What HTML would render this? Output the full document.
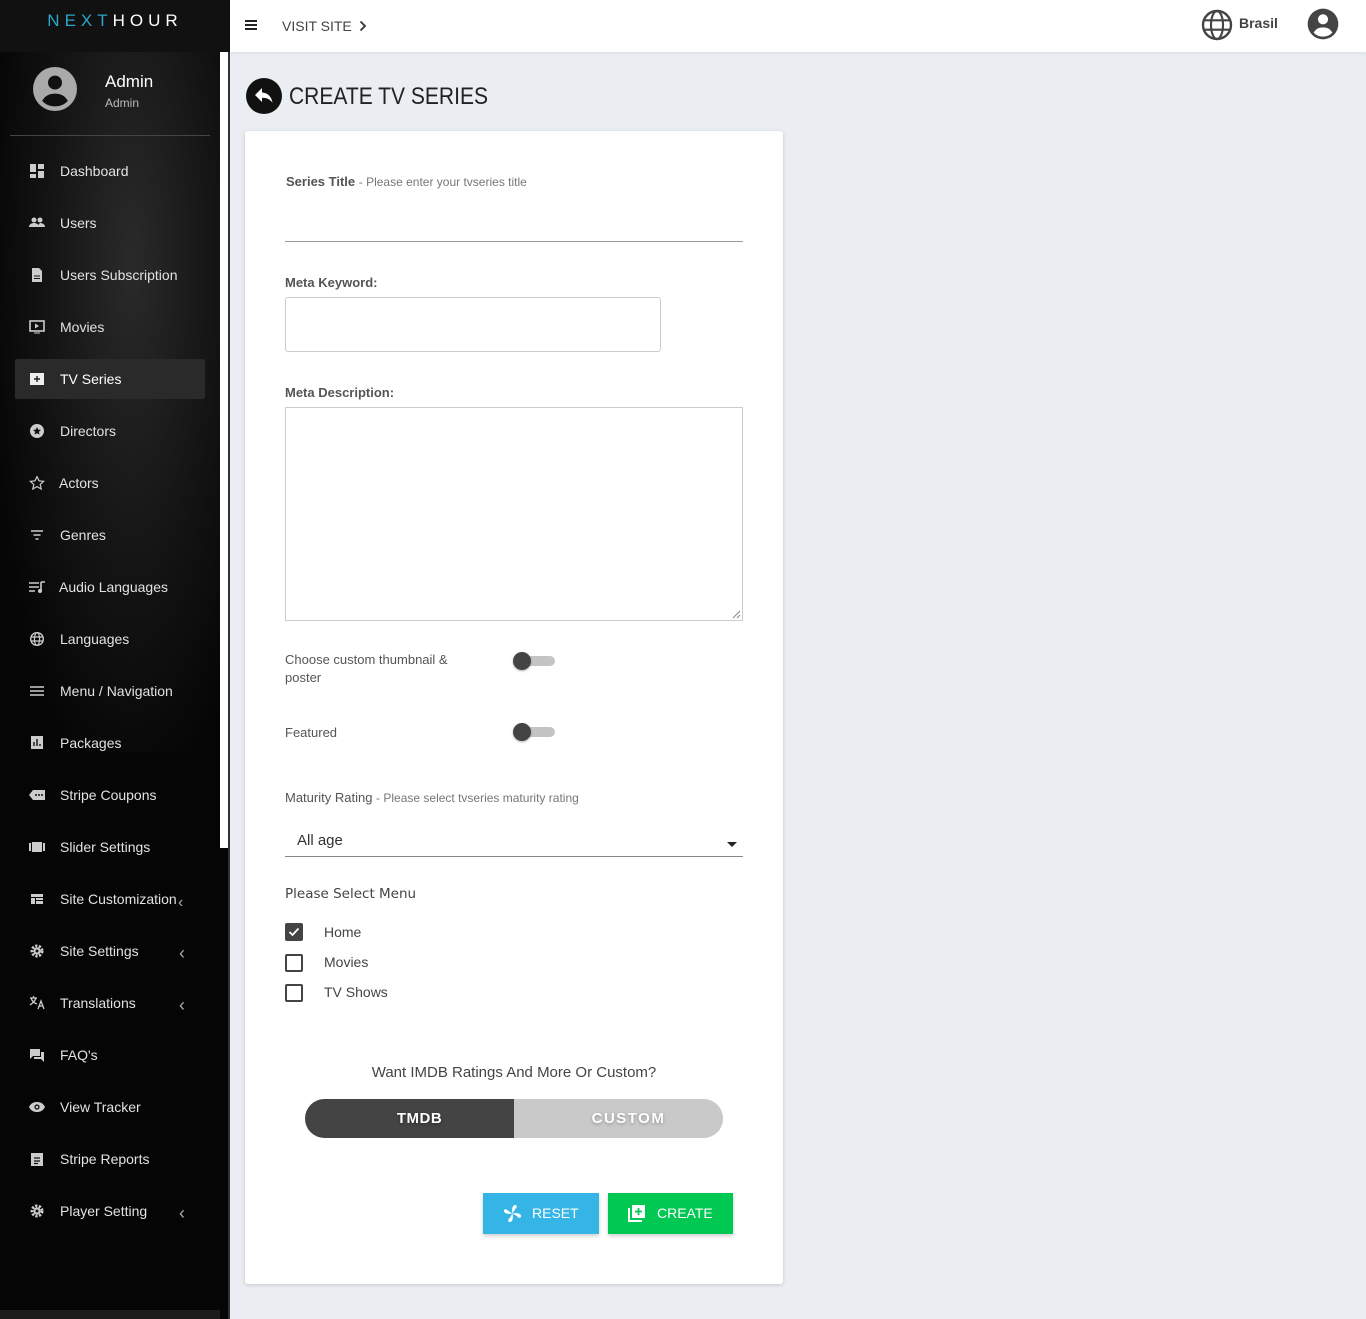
<!DOCTYPE html>
<html><head><meta charset="utf-8">
<style>
*{box-sizing:border-box;margin:0;padding:0}
body{width:1366px;height:1319px;overflow:hidden;background:#eaedf2;font-family:"Liberation Sans",sans-serif;position:relative}
#side{position:absolute;left:0;top:0;width:230px;height:1319px;background:#050505;}
#side .bg{position:absolute;left:0;top:52px;width:220px;height:700px;background:radial-gradient(ellipse at 60% 30%,#2a2a2a 0%,#141414 45%,#050505 80%)}
#logo{position:absolute;left:0;top:0;width:230px;height:52px;background:#111;text-align:center;line-height:42px;font-size:17px;letter-spacing:5px}
#logo .a{color:#2aa6c8}#logo .b{color:#fff}
.strip{position:absolute;left:220px;top:52px;width:8px;height:796px;background:#fff}
.strip2{position:absolute;left:228px;top:52px;width:2px;height:1267px;background:#2b3338}
.user{position:absolute;left:33px;top:67px}
.uname{position:absolute;left:105px;top:72px;color:#fff;font-size:17px}
.urole{position:absolute;left:105px;top:96px;color:#bbb;font-size:12px}
.hr{position:absolute;left:10px;top:135px;width:200px;height:1px;background:#444}
.item{position:absolute;left:0;width:220px;height:40px;color:#e2e2e2;font-size:14px;line-height:40px}
.item .ic{position:absolute;left:29px;top:13px;width:16px;height:14px}
.item span.t{position:absolute;left:60px}
.item .ch{position:absolute;left:179px;top:2px;color:#aaa;font-size:18px}
.active{background:#2a2a2a;left:15px;width:190px;border-radius:2px}
.active .ic{left:14px}.active span.t{left:45px}
#top{position:absolute;left:230px;top:0;width:1136px;height:52px;background:#fff;box-shadow:0 1px 3px rgba(0,0,0,.08)}
#card{position:absolute;left:245px;top:131px;width:538px;height:1153px;background:#fff;border-radius:3px;box-shadow:0 1px 4px rgba(0,0,0,.15)}
.lbl{position:absolute;color:#555;font-size:13px}
.lbl small{color:#777;font-size:12px}
.tog{position:absolute;width:40px;height:10px;background:#c4c4c4;border-radius:5px}
.tog:before{content:"";position:absolute;left:-2px;top:-4px;width:18px;height:18px;border-radius:50%;background:#444;box-shadow:0 1px 2px rgba(0,0,0,.3)}
.cb{position:absolute;left:285px;width:18px;height:18px;border:2px solid #444;border-radius:2px}
.cbl{position:absolute;left:324px;font-size:14px;color:#444}
</style></head><body>
<div id="side">
<div class="bg"></div>
<div id="logo"><span class="a">NEXT</span><span class="b">HOUR</span></div>
<div class="strip"></div><div class="strip2"></div>
<svg class="user" width="44" height="44" viewBox="0 0 24 24"><circle cx="12" cy="12" r="12" fill="#aaa"/><circle cx="12" cy="8.5" r="3.8" fill="#111"/><path d="M5 18.5c1.5-3 4.2-4 7-4s5.5 1 7 4c-1.8 2-4.2 3-7 3s-5.2-1-7-3z" fill="#111"/></svg>
<div class="uname">Admin</div><div class="urole">Admin</div>
<div class="hr"></div>
<div class="item" style="top:151px"><svg class="ic" viewBox="0 0 16 14"><path d="M1 0h6v8H1zM9 0h6v5H9zM9 7h6v7H9zM1 10h6v4H1z" fill="#ccc"/></svg><span class="t">Dashboard</span></div>
<div class="item" style="top:203px"><svg class="ic" viewBox="0 0 16 14"><circle cx="5" cy="4" r="2.5" fill="#ccc"/><circle cx="11" cy="4" r="2.5" fill="#ccc"/><path d="M0 11c0-3 3-4 5-4s5 1 5 4zM9 11c0-2 1-3 2-4 2 0 5 1 5 4z" fill="#ccc"/></svg><span class="t">Users</span></div>
<div class="item" style="top:255px"><svg class="ic" viewBox="0 0 16 14"><path d="M3 0h7l3 3v11H3z" fill="#ccc"/><path d="M5 8h6M5 10.5h6" stroke="#111" stroke-width="1"/></svg><span class="t">Users Subscription</span></div>
<div class="item" style="top:307px"><svg class="ic" viewBox="0 0 16 14"><rect x="1" y="1" width="14" height="10" fill="none" stroke="#ccc" stroke-width="1.6"/><path d="M6 3.5v5l4-2.5z" fill="#ccc"/><path d="M5 13h6" stroke="#ccc"/></svg><span class="t">Movies</span></div>
<div class="item active" style="top:359px"><svg class="ic" viewBox="0 0 16 14"><rect x="1" y="1" width="14" height="12" fill="#eee"/><path d="M5 7h6M8 4v6" stroke="#222" stroke-width="1.4"/></svg><span class="t" style="color:#fff">TV Series</span></div>
<div class="item" style="top:411px"><svg class="ic" viewBox="0 0 16 14"><circle cx="8" cy="7" r="7" fill="#ccc"/><path d="M8 3l1.2 2.6 2.8.3-2.1 1.9.6 2.8L8 9.2l-2.5 1.4.6-2.8L4 5.9l2.8-.3z" fill="#111"/></svg><span class="t">Directors</span></div>
<div class="item" style="top:463px"><svg class="ic" viewBox="0 0 16 14"><path d="M8 0.5l2 4.3 4.6.5-3.4 3.1 1 4.6L8 10.6l-4.2 2.4 1-4.6L1.4 5.3 6 4.8z" fill="none" stroke="#ccc" stroke-width="1.2"/></svg><span class="t" style="left:59px">Actors</span></div>
<div class="item" style="top:515px"><svg class="ic" viewBox="0 0 16 14"><path d="M2 3h12M4.5 7h7M6.5 11h3" stroke="#ccc" stroke-width="1.6"/></svg><span class="t">Genres</span></div>
<div class="item" style="top:567px"><svg class="ic" viewBox="0 0 16 14"><path d="M0 3h10M0 7h10M0 11h6M12 2v9M12 2h4" stroke="#ccc" stroke-width="1.6"/><circle cx="11" cy="11" r="2" fill="#ccc"/></svg><span class="t" style="left:59px">Audio Languages</span></div>
<div class="item" style="top:619px"><svg class="ic" viewBox="0 0 16 14"><circle cx="8" cy="7" r="6.3" fill="none" stroke="#ccc" stroke-width="1.4"/><ellipse cx="8" cy="7" rx="2.6" ry="6.3" fill="none" stroke="#ccc" stroke-width="1.2"/><path d="M2 5h12M2 9h12" stroke="#ccc" stroke-width="1.2"/></svg><span class="t">Languages</span></div>
<div class="item" style="top:671px"><svg class="ic" viewBox="0 0 16 14"><path d="M1 3h14M1 7h14M1 11h14" stroke="#ccc" stroke-width="1.6"/></svg><span class="t">Menu / Navigation</span></div>
<div class="item" style="top:723px"><svg class="ic" viewBox="0 0 16 14"><rect x="2" y="0" width="12" height="13" fill="#ccc"/><path d="M5 10V6M8 10V3M11 10V8" stroke="#111" stroke-width="1.4"/></svg><span class="t">Packages</span></div>
<div class="item" style="top:775px"><svg class="ic" viewBox="0 0 16 14"><path d="M4 2h12v10H4L0 7z" fill="#ccc"/><circle cx="7" cy="7" r="1" fill="#111"/><circle cx="10" cy="7" r="1" fill="#111"/><circle cx="13" cy="7" r="1" fill="#111"/></svg><span class="t">Stripe Coupons</span></div>
<div class="item" style="top:827px"><svg class="ic" viewBox="0 0 16 14"><path d="M0 3h2v8H0zM3 2h10v10H3zM14 3h2v8h-2z" fill="#ccc"/></svg><span class="t">Slider Settings</span></div>
<div class="item" style="top:879px"><svg class="ic" viewBox="0 0 16 14"><path d="M2 2h12v3H2zM2 6h4v6H2zM7 6h7v2H7zM7 9h7v3H7z" fill="#ccc"/></svg><span class="t">Site Customization</span><span class="ch" style="left:178px;top:4px;font-size:16px">‹</span></div>
<div class="item" style="top:931px"><svg class="ic" viewBox="0 0 16 14"><circle cx="8" cy="7" r="5" fill="none" stroke="#ccc" stroke-width="3" stroke-dasharray="2.2 1.4"/><circle cx="8" cy="7" r="3.5" fill="#ccc"/><circle cx="8" cy="7" r="1.5" fill="#111"/></svg><span class="t">Site Settings</span><span class="ch">‹</span></div>
<div class="item" style="top:983px"><svg class="ic" viewBox="0 0 16 14"><path d="M1 2h7M4.5 0v2M2 2c1 3 3 5 6 6M7 2c-1 3-3 5-6 7M9 13l3-8 3 8M10 10h4" stroke="#ccc" stroke-width="1.3" fill="none"/></svg><span class="t">Translations</span><span class="ch">‹</span></div>
<div class="item" style="top:1035px"><svg class="ic" viewBox="0 0 16 14"><path d="M1 1h10v7H4l-3 3z" fill="#ccc"/><path d="M12 4h3v10l-3-3H5V9h7z" fill="#ccc"/></svg><span class="t">FAQ's</span></div>
<div class="item" style="top:1087px"><svg class="ic" viewBox="0 0 16 14"><path d="M0 7c2-4 5-5 8-5s6 1 8 5c-2 4-5 5-8 5s-6-1-8-5z" fill="#ccc"/><circle cx="8" cy="7" r="2.6" fill="#111"/><circle cx="8" cy="7" r="1.3" fill="#ccc"/></svg><span class="t">View Tracker</span></div>
<div class="item" style="top:1139px"><svg class="ic" viewBox="0 0 16 14"><rect x="2" y="1" width="12" height="13" fill="#ccc"/><path d="M5 6h6M5 9h6M5 11.5h4" stroke="#111" stroke-width="1.2"/></svg><span class="t">Stripe Reports</span></div>
<div class="item" style="top:1191px"><svg class="ic" viewBox="0 0 16 14"><circle cx="8" cy="7" r="5" fill="none" stroke="#ccc" stroke-width="3" stroke-dasharray="2.2 1.4"/><circle cx="8" cy="7" r="3.5" fill="#ccc"/><circle cx="8" cy="7" r="1.5" fill="#111"/></svg><span class="t">Player Setting</span><span class="ch">‹</span></div>
<div style="position:absolute;left:0;top:1310px;width:220px;height:9px;background:#1c1c1c"></div>
</div>

<div id="top">
<svg style="position:absolute;left:15px;top:20px" width="12" height="10" viewBox="0 0 12 10"><path d="M0 1h12M0 5h12M0 9h12" stroke="#222" stroke-width="2"/></svg>
<div style="position:absolute;left:52px;top:18px;font-size:14px;color:#444">VISIT SITE</div>
<svg style="position:absolute;left:129px;top:20px" width="8" height="12" viewBox="0 0 8 12"><path d="M1.5 1.5l4.5 4.5-4.5 4.5" stroke="#333" stroke-width="1.8" fill="none"/></svg>
<svg style="position:absolute;left:971px;top:9px" width="32" height="32" viewBox="0 0 24 24"><circle cx="12" cy="12" r="10.5" fill="none" stroke="#444" stroke-width="1.8"/><ellipse cx="12" cy="12" rx="4.5" ry="10.5" fill="none" stroke="#444" stroke-width="1.6"/><path d="M1.5 8.5h21M1.5 15.5h21" stroke="#444" stroke-width="1.6"/></svg>
<div style="position:absolute;left:1009px;top:15px;font-size:14px;font-weight:bold;color:#444">Brasil</div>
<svg style="position:absolute;left:1077px;top:8px" width="32" height="32" viewBox="0 0 24 24"><circle cx="12" cy="12" r="11.5" fill="#444"/><circle cx="12" cy="8.5" r="3.8" fill="#fff"/><path d="M5 18.5c1.5-3 4.2-4 7-4s5.5 1 7 4c-1.8 2-4.2 3-7 3s-5.2-1-7-3z" fill="#fff"/></svg>
</div>

<svg style="position:absolute;left:245px;top:77px" width="38" height="38" viewBox="0 0 38 38"><circle cx="19" cy="19" r="18" fill="#111"/><path d="M17 11l-7 7 7 7v-4.3c5 0 8 1.5 10.5 5-1-5.5-4-9.5-10.5-10.3z" fill="#fff"/></svg>
<div style="position:absolute;left:289px;top:83px;font-size:24px;color:#222;transform:scaleX(.876);transform-origin:0 0;white-space:nowrap">CREATE TV SERIES</div>

<div id="card"></div>
<div class="lbl" style="left:286px;top:174px;font-weight:bold;font-size:13px;color:#555">Series Title <small style="font-weight:normal">- Please enter your tvseries title</small></div>
<div style="position:absolute;left:285px;top:241px;width:458px;height:1px;background:#999"></div>
<div class="lbl" style="left:285px;top:275px;font-weight:bold">Meta Keyword:</div>
<div style="position:absolute;left:285px;top:297px;width:376px;height:55px;border:1px solid #ccc;border-radius:3px"></div>
<div class="lbl" style="left:285px;top:385px;font-weight:bold">Meta Description:</div>
<div style="position:absolute;left:285px;top:407px;width:458px;height:214px;border:1px solid #ccc"></div>
<svg style="position:absolute;left:732px;top:610px" width="9" height="9" viewBox="0 0 9 9"><path d="M8 1L1 8M8 5L5 8" stroke="#888"/></svg>
<div class="lbl" style="left:285px;top:651px;line-height:18px">Choose custom thumbnail &amp;<br>poster</div>
<div class="tog" style="left:515px;top:656px"></div>
<div class="lbl" style="left:285px;top:725px">Featured</div>
<div class="tog" style="left:515px;top:727px"></div>
<div class="lbl" style="left:285px;top:790px">Maturity Rating <small>- Please select tvseries maturity rating</small></div>
<div style="position:absolute;left:297px;top:832px;font-size:15px;color:#333">All age</div>
<svg style="position:absolute;left:727px;top:842px" width="10" height="6"><path d="M0 0h10L5 5z" fill="#222"/></svg>
<div style="position:absolute;left:285px;top:856px;width:458px;height:1px;background:#888"></div>
<div style="position:absolute;left:285px;top:886px;color:#444;font-family:'DejaVu Sans',sans-serif;font-size:13.5px">Please Select Menu</div>
<div class="cb" style="top:923px;background:#444"><svg width="14" height="14" viewBox="0 0 14 14"><path d="M2.5 7l3 3 6-6.5" stroke="#fff" stroke-width="1.8" fill="none"/></svg></div>
<div class="cbl" style="top:924px">Home</div>
<div class="cb" style="top:954px"></div><div class="cbl" style="top:954px">Movies</div>
<div class="cb" style="top:984px"></div><div class="cbl" style="top:984px">TV Shows</div>
<div style="position:absolute;left:245px;width:538px;top:1064px;text-align:center;font-size:15px;color:#444">Want IMDB Ratings And More Or Custom?</div>
<div style="position:absolute;left:305px;top:1099px;width:418px;height:39px;border-radius:20px;overflow:hidden;background:#c9c9c9">
<div style="position:absolute;left:0;top:0;width:229px;height:39px;background:#444;"></div>
<div style="position:absolute;left:0;top:0;width:229px;height:39px;color:#fff;text-align:center;line-height:39px;font-weight:bold;font-size:15px;letter-spacing:.5px;text-shadow:0 1px 3px rgba(0,0,0,.4)">TMDB</div>
<div style="position:absolute;left:209px;top:0;width:229px;height:39px;background:#c9c9c9;color:#fff;text-align:center;line-height:39px;font-weight:bold;font-size:15px;letter-spacing:1.5px;text-shadow:0 1px 3px rgba(0,0,0,.3)">CUSTOM</div></div>
<div style="position:absolute;left:483px;top:1193px;width:116px;height:41px;background:#35b5e5;box-shadow:0 2px 4px rgba(0,0,0,.2);color:#fff;font-size:14px;line-height:41px">
<svg style="position:absolute;left:20px;top:11px" width="19" height="19" viewBox="0 0 20 20"><path d="M10 10C9 5 10 1 13 1c2 0 2 3 0 4zM10 10c5-1 9 0 9 3 0 2-3 2-4 0zM10 10c1 5 0 9-3 9-2 0-2-3 0-4zM10 10C5 11 1 10 1 7c0-2 3-2 4 0z" fill="#fff"/></svg><span style="position:absolute;left:49px">RESET</span></div>
<div style="position:absolute;left:608px;top:1193px;width:125px;height:41px;background:#00c853;box-shadow:0 2px 4px rgba(0,0,0,.2);color:#fff;font-size:14px;line-height:41px">
<svg style="position:absolute;left:20px;top:11px" width="18" height="18" viewBox="0 0 18 18"><path d="M1 4v13h13" stroke="#fff" stroke-width="2" fill="none"/><rect x="4" y="1" width="13" height="13" fill="#fff"/><path d="M10.5 4v7M7 7.5h7" stroke="#00c853" stroke-width="1.8"/></svg><span style="position:absolute;left:49px">CREATE</span></div>
</body></html>
